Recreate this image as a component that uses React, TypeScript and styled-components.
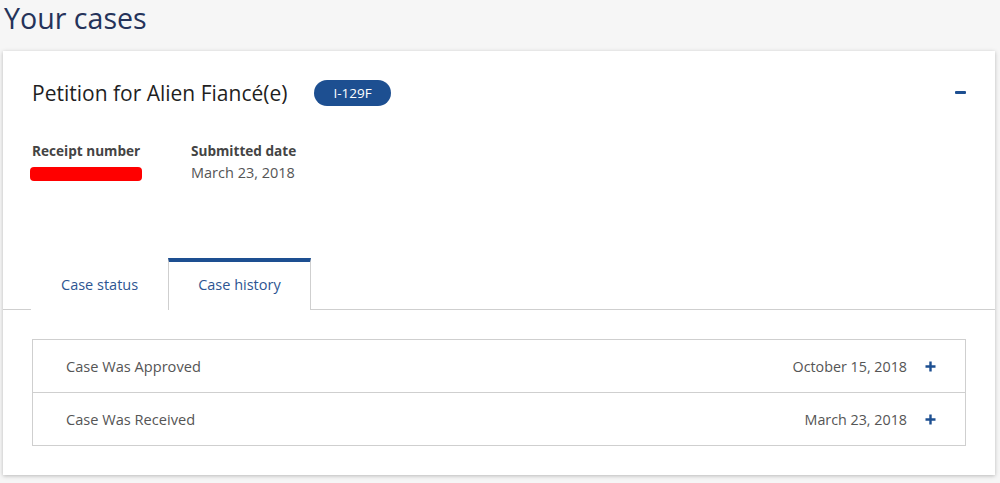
import React from 'react'
import styled, { createGlobalStyle } from 'styled-components'

const GlobalStyle = createGlobalStyle`
  html, body {
    margin: 0;
    padding: 0;
    background: #f6f6f6;
    font-family: "Open Sans", Lato, Arial, sans-serif;
  }
`

const Page = styled.div`
  width: 1000px;
  min-height: 483px;
  padding: 0 5px 0 3px;
  box-sizing: border-box;
`

const PageTitle = styled.h1`
  margin: 0;
  padding-left: 1px;
  height: 51px;
  font-size: 28.6px;
  font-weight: 400;
  color: #25335a;
  line-height: 36px;
`

const Card = styled.section`
  background: #fff;
  box-shadow: 0 1px 4px rgba(0, 0, 0, 0.25);
  height: 424px;
`

const CardHeader = styled.div`
  display: flex;
  align-items: center;
  padding: 28px 29px 0 29px;
  height: 27px;
`

const CaseTitle = styled.h2`
  margin: 0;
  font-size: 21px;
  font-weight: 400;
  color: #1f1f1f;
`

const Badge = styled.span`
  margin-left: 27px;
  background: #1d4f91;
  color: #fff;
  font-size: 13.5px;
  line-height: 26px;
  padding: 0 19px;
  border-radius: 13px;
`

const Toggle = styled.span`
  margin-left: auto;
  width: 11px;
  height: 3px;
  background: #1d4f91;
  border-radius: 1px;
`

const Meta = styled.div`
  display: flex;
  gap: 50px;
  padding: 35px 29px 0 29px;
  height: 152px;
  box-sizing: border-box;
`

const MetaItem = styled.div<{ $w: number }>`
  width: ${p => p.$w}px;
  display: flex;
  flex-direction: column;
  gap: 3px;
`

const MetaLabel = styled.div`
  font-size: 13.6px;
  font-weight: 700;
  color: #444;
`

const MetaValue = styled.div`
  font-size: 14.5px;
  color: #555;
`

const Redacted = styled.div`
  width: 112px;
  height: 14px;
  background: #ff0000;
  border-radius: 4px;
  margin-left: -2px;
  margin-top: 4px;
`

const Tabs = styled.div`
  display: flex;
  padding-left: 28px;
  border-bottom: 1px solid #cfcfcf;
`

const Tab = styled.div<{ $active?: boolean }>`
  padding: 0 29px;
  font-size: 14.5px;
  color: #2d5592;
  box-sizing: border-box;
  border: 1px solid ${p => (p.$active ? '#cfcfcf' : 'transparent')};
  border-top: 4px solid ${p => (p.$active ? '#1d4f91' : 'transparent')};
  border-bottom: none;
  background: #fff;
  margin-bottom: -1px;
  height: 52px;
  line-height: 45px;
`

const HistoryArea = styled.div`
  padding: 29px 29px 0 29px;
`

const HistoryList = styled.div`
  border: 1px solid #cfcfcf;
`

const HistoryRow = styled.div`
  display: flex;
  align-items: center;
  height: 52px;
  padding: 0 29px 0 33px;
  font-size: 14.6px;
  color: #555;
  & + & {
    border-top: 1px solid #cfcfcf;
  }
`

const RowDate = styled.span`
  margin-left: auto;
  margin-right: 18px;
  font-size: 14.3px;
`

const Plus = styled.svg`
  width: 11px;
  height: 11px;
  display: block;
`

const history = [
  { label: 'Case Was Approved', date: 'October 15, 2018' },
  { label: 'Case Was Received', date: 'March 23, 2018' },
]

export default function App() {
  return (
    <>
      <GlobalStyle />
      <Page>
        <PageTitle>Your cases</PageTitle>
        <Card>
          <CardHeader>
            <CaseTitle>Petition for Alien Fiancé(e)</CaseTitle>
            <Badge>I-129F</Badge>
            <Toggle />
          </CardHeader>
          <Meta>
            <MetaItem $w={109}>
              <MetaLabel>Receipt number</MetaLabel>
              <Redacted />
            </MetaItem>
            <MetaItem $w={140}>
              <MetaLabel>Submitted date</MetaLabel>
              <MetaValue>March 23, 2018</MetaValue>
            </MetaItem>
          </Meta>
          <Tabs>
            <Tab>Case status</Tab>
            <Tab $active>Case history</Tab>
          </Tabs>
          <HistoryArea>
            <HistoryList>
              {history.map(h => (
                <HistoryRow key={h.label}>
                  <span>{h.label}</span>
                  <RowDate>{h.date}</RowDate>
                  <Plus viewBox="0 0 11 11">
                    <path d="M5.5 0.5v10M0.5 5.5h10" stroke="#1d4f91" strokeWidth="2.4" />
                  </Plus>
                </HistoryRow>
              ))}
            </HistoryList>
          </HistoryArea>
        </Card>
      </Page>
    </>
  )
}
